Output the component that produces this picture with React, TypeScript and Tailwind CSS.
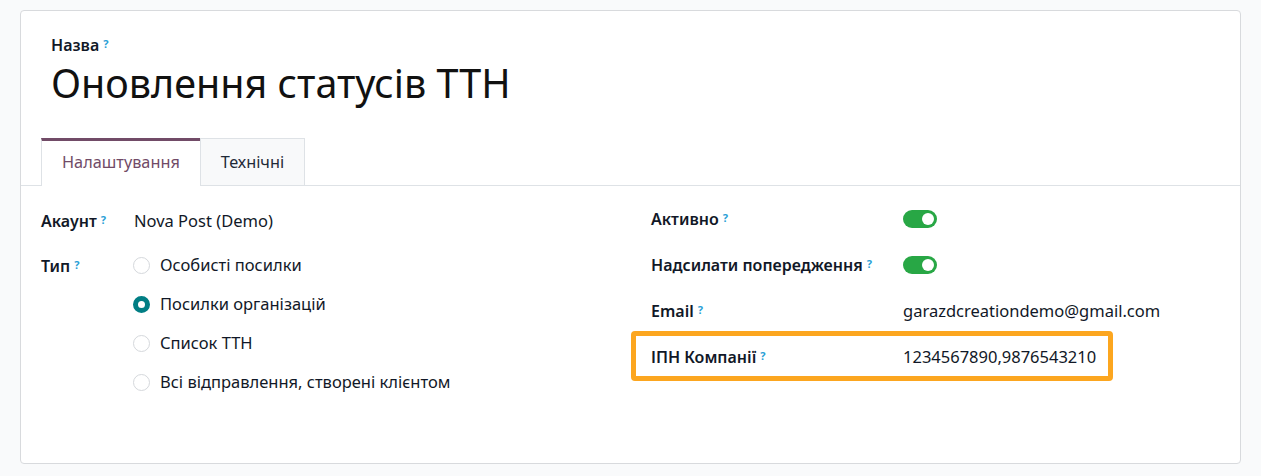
import type { ReactNode } from 'react';

const FONT = { fontFamily: '"Noto Sans", "Open Sans", sans-serif' };

function Help() {
  return <sup className="ml-[4px] text-[11px] font-bold text-[#2a9fd6] relative -top-[3px]">?</sup>;
}

function Label({ children }: { children: ReactNode }) {
  return (
    <span className="text-[16px] leading-[24px] font-semibold text-[#111827] whitespace-nowrap">
      {children}
      <Help />
    </span>
  );
}

function Toggle() {
  return (
    <span className="inline-flex items-center justify-end w-[34px] h-[18px] rounded-full bg-[#28a745] px-[3px]">
      <span className="w-[12px] h-[12px] rounded-full bg-white" />
    </span>
  );
}

function Radio({ checked, label }: { checked?: boolean; label: string }) {
  return (
    <div className="flex items-center h-[39px]">
      {checked ? (
        <span className="w-[17px] h-[17px] rounded-full border-[5px] border-[#017e84] bg-white" />
      ) : (
        <span className="w-[17px] h-[17px] rounded-full border border-[#d5d8dc] bg-white" />
      )}
      <span className="ml-[10px] text-[16.5px] text-[#111827]">{label}</span>
    </div>
  );
}

const TYPES = [
  { label: 'Особисті посилки' },
  { label: 'Посилки організацій', checked: true },
  { label: 'Список ТТН' },
  { label: 'Всі відправлення, створені клієнтом' },
];

export default function App() {
  return (
    <div className="min-h-screen bg-[#f9fafb] px-5 pt-[10px]" style={FONT}>
      <div className="h-[454px] rounded-[4px] border border-[#d8dadd] bg-white">
        {/* title */}
        <div className="pl-[30px] pt-[22px]">
          <div className="h-[24px]">
            <Label>Назва</Label>
          </div>
          <h1 className="text-[39.5px] leading-[52px] text-[#111111]">Оновлення статусів ТТН</h1>
        </div>

        {/* tabs */}
        <div className="mt-[29px] flex items-end border-b border-[#dee2e6] pl-5">
          <div className="-mb-px border-t-[3px] border-l border-[#714b67] border-l-[#dee2e6] bg-white px-5 pt-[10px] pb-[13px] text-[16.3px] leading-[22px] text-[#714b67]">
            Налаштування
          </div>
          <div className="-mb-px border border-[#dee2e6] bg-[#f8f9fa] px-5 pt-[12px] pb-[12px] text-[16.3px] leading-[22px] text-[#1f2937]">
            Технічні
          </div>
        </div>

        {/* fields */}
        <div className="flex pl-5 pt-[18px]">
          <div className="w-[610px]">
            <div className="flex items-center h-[34px]">
              <div className="w-[93px]">
                <Label>Акаунт</Label>
              </div>
              <span className="text-[16.5px] text-[#111827]">Nova Post (Demo)</span>
            </div>
            <div className="flex mt-[8px]">
              <div className="w-[93px] pt-[8px]">
                <Label>Тип</Label>
              </div>
              <div className="-ml-[1px]">
                {TYPES.map((t) => (
                  <Radio key={t.label} label={t.label} checked={t.checked} />
                ))}
              </div>
            </div>
          </div>

          <div className="flex-1 -mt-[8px]">
            <div className="flex items-center h-[46px]">
              <div className="w-[252px]">
                <Label>Активно</Label>
              </div>
              <Toggle />
            </div>
            <div className="flex items-center h-[46px]">
              <div className="w-[252px]">
                <Label>Надсилати попередження</Label>
              </div>
              <Toggle />
            </div>
            <div className="flex items-center h-[46px]">
              <div className="w-[252px]">
                <Label>Email</Label>
              </div>
              <span className="text-[16.5px] text-[#111827]">garazdcreationdemo@gmail.com</span>
            </div>
            <div className="relative flex items-center h-[46px]">
              <div className="w-[252px]">
                <Label>ІПН Компанії</Label>
              </div>
              <span className="text-[16.5px] text-[#111827]">1234567890,9876543210</span>
              <div className="pointer-events-none absolute -left-[20px] -top-[3px] h-[50px] w-[482px] rounded-[4px] border-[5px] border-[#fca61f]" />
            </div>
          </div>
        </div>
      </div>
    </div>
  );
}
